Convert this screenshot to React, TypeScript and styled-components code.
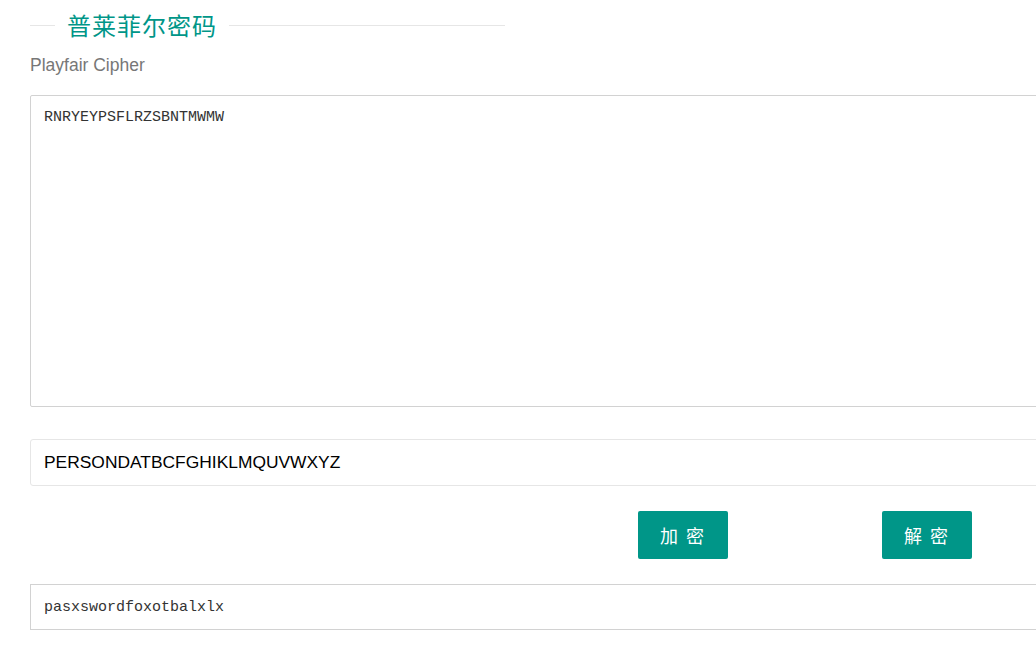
import type { FC } from 'react';
import styled, { createGlobalStyle } from 'styled-components';

const GlobalStyle = createGlobalStyle`
  html, body {
    margin: 0;
    padding: 0;
    background: #fff;
    overflow: hidden;
  }
  body {
    font-family: "Liberation Sans", Arial, "Noto Sans CJK SC", sans-serif;
    color: #333;
  }
`;

const Page = styled.div`
  width: 1060px;
  padding-left: 30px;
  box-sizing: border-box;
`;

const FieldHead = styled.div`
  display: flex;
  align-items: center;
  width: 475px;
  height: 50px;
`;

const Rule = styled.div<{ $grow?: boolean }>`
  height: 1px;
  background: #e6e6e6;
  flex: ${p => (p.$grow ? '1' : '0 0 25px')};
`;

const Legend = styled.h2`
  margin: 0;
  padding: 0 12px;
  font-family: "Noto Sans CJK SC", "Liberation Sans", sans-serif;
  font-weight: 400;
  font-size: 24px;
  line-height: 30px;
  color: #009688;
  letter-spacing: 1px;
`;

const Subtitle = styled.p`
  margin: 5px 0 0;
  font-size: 17.5px;
  line-height: 20px;
  color: #777;
`;

const CipherArea = styled.textarea`
  display: block;
  width: 100%;
  height: 312px;
  margin-top: 20px;
  padding: 11px 13px;
  box-sizing: border-box;
  border: 1px solid #d2d2d2;
  border-radius: 2px;
  resize: none;
  outline: none;
  font-family: "Liberation Mono", "Courier New", monospace;
  font-size: 15px;
  line-height: 22px;
  color: #333;
  background: #fff;
`;

const KeyInput = styled.input`
  display: block;
  width: 100%;
  height: 47px;
  margin-top: 32px;
  padding: 0 13px;
  box-sizing: border-box;
  border: 1px solid #e6e6e6;
  border-radius: 3px;
  outline: none;
  font-family: "Liberation Sans", Arial, sans-serif;
  font-size: 17.4px;
  color: #000;
  background: #fff;
`;

const ButtonRow = styled.div`
  display: flex;
  gap: 154px;
  margin-top: 25px;
  padding-left: 608px;
`;

const ActionButton = styled.button`
  width: 90px;
  height: 48px;
  padding: 0;
  border: none;
  border-radius: 2px;
  background: #009688;
  color: #fff;
  font-family: "Noto Sans CJK SC", "Liberation Sans", sans-serif;
  font-size: 18px;
  letter-spacing: 2px;
  cursor: pointer;
`;

const Output = styled.div`
  height: 46px;
  margin-top: 25px;
  padding: 0 13px;
  box-sizing: border-box;
  display: flex;
  align-items: center;
  border: 1px solid #d2d2d2;
  font-family: "Liberation Mono", "Courier New", monospace;
  font-size: 15px;
  color: #333;
`;

export const App: FC = () => {
  return (
    <Page>
      <GlobalStyle />
      <FieldHead>
        <Rule />
        <Legend>普莱菲尔密码</Legend>
        <Rule $grow />
      </FieldHead>
      <Subtitle>Playfair Cipher</Subtitle>

      <CipherArea defaultValue="RNRYEYPSFLRZSBNTMWMW" />
      <KeyInput defaultValue="PERSONDATBCFGHIKLMQUVWXYZ" />

      <ButtonRow>
        <ActionButton>加 密</ActionButton>
        <ActionButton>解 密</ActionButton>
      </ButtonRow>

      <Output>pasxswordfoxotbalxlx</Output>
    </Page>
  );
};

export default App;
